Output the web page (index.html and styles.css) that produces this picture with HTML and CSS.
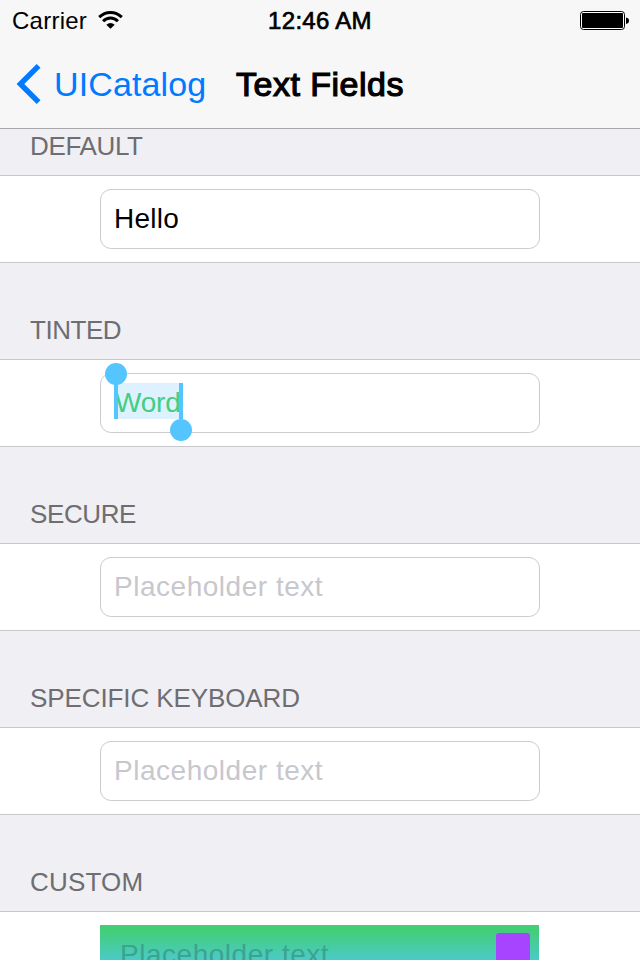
FILE: index.html
```html
<!DOCTYPE html>
<html lang="en">
<head>
<meta charset="utf-8">
<title>Text Fields</title>
<link rel="stylesheet" href="styles.css">
</head>
<body>
<header class="bar">
  <div class="status">
    <div class="carrier"><span class="carrier-name">Carrier</span>
      <svg class="wifi" width="26" height="20" viewBox="0 0 26 20"><g fill="none" stroke="#000" stroke-width="3"><path d="M1.2 7.2C7.7.9 17.3.9 23.8 7.2"/><path d="M5.1 11.2C9.4 7 15.6 7 19.9 11.2"/></g><path d="M8.3 14.7Q12.5 11.5 16.7 14.7L12.5 18.8Z"/></svg>
    </div>
    <span class="time">12:46 AM</span>
    <svg class="battery" width="50" height="20" viewBox="0 0 50 20"><rect x=".5" y=".5" width="44" height="18" rx="3" fill="#fff" stroke="#000"/><rect x="2" y="2" width="41" height="15" rx="1"/><path d="M46 6.5q3 .5 3 3.2t-3 3.2z"/></svg>
  </div>
  <nav class="nav">
    <svg class="chevron" width="26" height="42" viewBox="0 0 26 42"><path d="M22.6 2.8 4.4 21 22.6 39.2" fill="none" stroke="#007aff" stroke-width="5.4"/></svg>
    <a class="back">UICatalog</a>
    <h1 class="title">Text Fields</h1>
  </nav>
</header>
<main>
  <h2 class="label first"><span class="t-default">DEFAULT</span></h2>
  <div class="row"><div class="field"><span class="hello">Hello</span></div></div>
  <h2 class="label"><span class="t-tinted">TINTED</span></h2>
  <div class="row"><div class="field"><span class="selection"><span class="word">Word</span></span></div></div>
  <h2 class="label"><span class="t-secure">SECURE</span></h2>
  <div class="row"><div class="field"><span class="placeholder">Placeholder text</span></div></div>
  <h2 class="label"><span class="t-keyboard">SPECIFIC KEYBOARD</span></h2>
  <div class="row"><div class="field"><span class="placeholder">Placeholder text</span></div></div>
  <h2 class="label"><span class="t-custom">CUSTOM</span></h2>
  <div class="row"><div class="field custom"><span class="placeholder">Placeholder text</span><i class="button"></i></div></div>
</main>
</body>
</html>
```
FILE: styles.css
```css
* { box-sizing: border-box; }
body {
  margin: 0;
  height: 960px;
  overflow: hidden;
  background: #efeff4;
  font-family: "Liberation Sans", Arial, sans-serif;
  white-space: nowrap;
}
.bar {
  height: 129px;
  background: #f7f7f7;
  border-bottom: 1px solid #a7a7aa;
}
.status {
  display: grid;
  grid-template-columns: 1fr auto 1fr;
  height: 40px;
  padding: 0 10px 0 12px;
  font-size: 24px;
  line-height: 42px;
}
.carrier { display: flex; }
.carrier-name { width: 86px; letter-spacing: 0.25px; }
.wifi { margin-top: 10px; }
.time {
  margin-left: -2px;
  -webkit-text-stroke: 0.7px #000;
  letter-spacing: 0.3px;
}
.battery { justify-self: end; margin-top: 11px; }
.nav {
  display: flex;
  height: 88px;
  padding-left: 16px;
  font-size: 34px;
  line-height: 88px;
}
.chevron { margin-top: 23px; }
.back {
  width: 180px;
  margin-left: 12px;
  color: #007aff;
  letter-spacing: 0.12px;
}
.title {
  margin: 0 0 0 2px;
  font-size: 34px;
  font-weight: 400;
  letter-spacing: 0.5px;
  -webkit-text-stroke: 1.2px #000;
}
.label {
  display: flex;
  align-items: flex-end;
  height: 96px;
  margin: 0;
  padding: 0 30px 14px;
  color: #6d6d72;
  font-size: 26px;
  font-weight: 400;
  line-height: 30px;
}
.first { height: 46px; }
.t-default { letter-spacing: -0.35px; }
.t-tinted { letter-spacing: -0.45px; }
.t-secure { letter-spacing: -0.4px; }
.t-keyboard { letter-spacing: -0.1px; }
.t-custom { letter-spacing: 0.2px; }
.row {
  height: 88px;
  padding: 13px 100px;
  background: #fff;
  border: solid #c8c7cc;
  border-width: 1px 0;
}
.field {
  display: flex;
  align-items: center;
  height: 60px;
  padding-left: 13px;
  border: 1px solid #ccc;
  border-radius: 11px;
  font-size: 28px;
  line-height: 36px;
}
.hello { letter-spacing: 0.25px; }
.placeholder { color: #c7c7cd; letter-spacing: 0.52px; }
.selection {
  position: relative;
  height: 36px;
  margin-top: -4px;
  width: 69px;
  background: #ddf2fe;
  border: solid #55c5ff;
  border-width: 0 4px;
  color: #43cd85;
}
.word {
  display: block;
  margin-left: -3px;
  padding-top: 2px;
  letter-spacing: -0.2px;
  clip-path: inset(0 0 0 3px);
}
.selection::before, .selection::after {
  content: "";
  position: absolute;
  width: 22px;
  height: 22px;
  border-radius: 50%;
  background: #55c5ff;
}
.selection::before { left: -13px; top: -20px; }
.selection::after { right: -13px; bottom: -22px; }
.custom {
  justify-content: space-between;
  align-items: flex-start;
  width: 439px;
  padding: 12px 9px 0 20px;
  border: 0;
  border-radius: 0;
  background: linear-gradient(#42cf70 0, #43ce76 5px, #4bcaca 36px, #4fc8e8 60px);
}
.custom .placeholder { color: #3ba48e; }
.button {
  width: 34px;
  height: 44px;
  margin-top: -4px;
  border-radius: 3px;
  background: #a644ff;
}
```
